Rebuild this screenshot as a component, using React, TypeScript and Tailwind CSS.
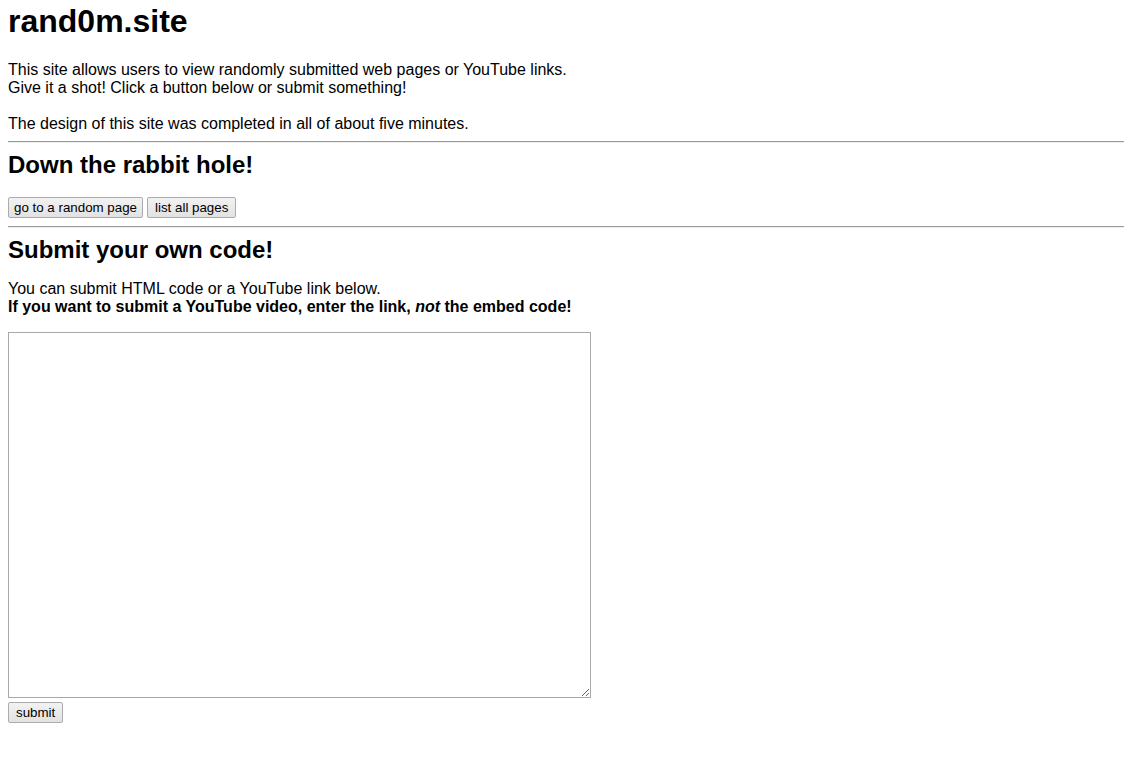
export default function App() {
  const btn =
    "h-[21px] rounded-[2px] border border-[#acacac] bg-gradient-to-b from-[#f2f2f2] to-[#e2e2e2] text-[13.33px] leading-[15px] text-black";

  return (
    <div className="min-h-[778px] bg-white pl-2 text-black [font-family:'Liberation_Sans',Arial,sans-serif]">
      <h1 className="pt-[3px] text-[32px] font-bold leading-[37px]">rand0m.site</h1>

      <div className="mt-[21px] text-[16px] leading-[18px]">
        <p>This site allows users to view randomly submitted web pages or YouTube links.</p>
        <p>Give it a shot! Click a button below or submit something!</p>
        <p className="mt-[18px]">The design of this site was completed in all of about five minutes.</p>
      </div>

      <div className="mt-[8px] h-[2px] border-t border-b border-t-[#9a9a9a] border-b-[#eeeeee]" />

      <h2 className="mt-[8px] text-[24px] font-bold leading-[28px]">Down the rabbit hole!</h2>

      <div className="mt-[18px] flex gap-[4px]">
        <button className={btn + " px-[5px]"}>go to a random page</button>
        <button className={btn + " px-[7px]"}>list all pages</button>
      </div>

      <div className="mt-[8px] h-[2px] border-t border-b border-t-[#9a9a9a] border-b-[#eeeeee]" />

      <h2 className="mt-[8px] text-[24px] font-bold leading-[28px]">Submit your own code!</h2>

      <div className="mt-[16px] text-[16px] leading-[18px]">
        <p>You can submit HTML code or a YouTube link below.</p>
        <p className="font-bold">
          If you want to submit a YouTube video, enter the link, <em>not</em> the embed code!
        </p>
      </div>

      <textarea className="mt-[16px] block h-[366px] w-[583px] border border-[#a9a9a9] bg-white outline-none" />

      <button className={btn + " mt-[4px] block px-[7px]"}>submit</button>
    </div>
  );
}
